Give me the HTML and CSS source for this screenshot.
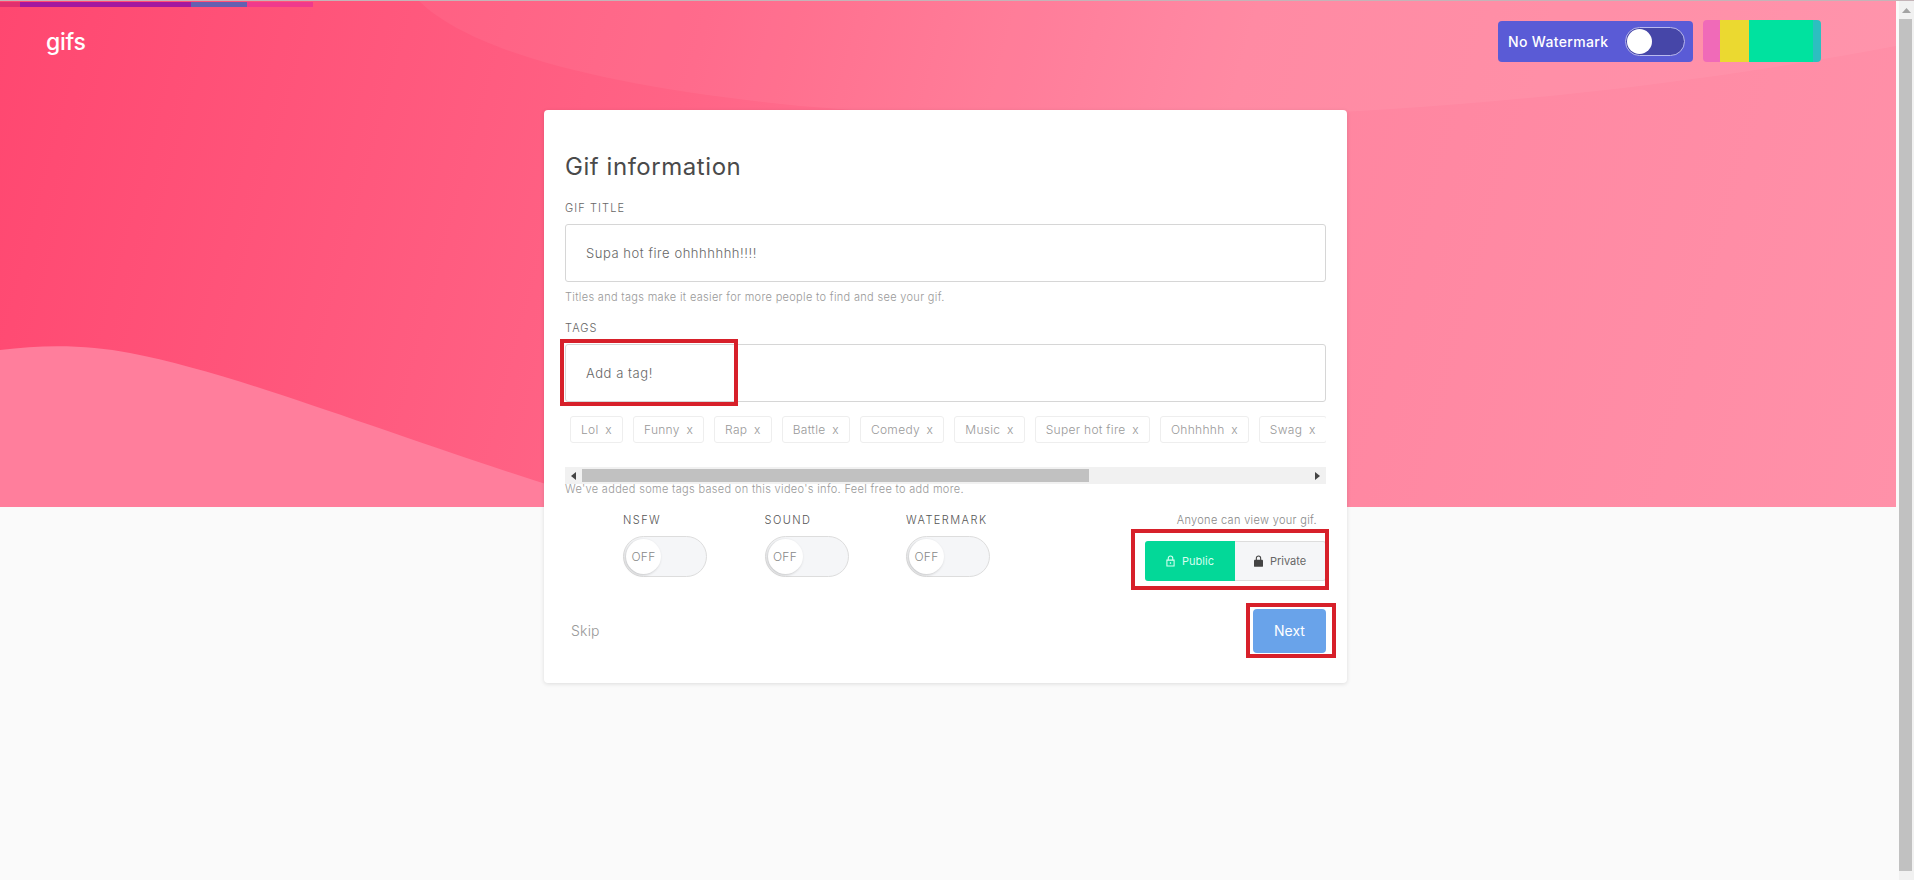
FILE: index.html
```html
<!DOCTYPE html>
<html lang="en">
<head>
    <meta charset="UTF-8">
    <meta name="viewport" content="width=device-width, initial-scale=1.0">
    <title>Gif information</title>
    <link rel="stylesheet" href="styles.css">
</head>
<body>
    <div class="page">
        <div class="hero">
            <svg class="waves" viewBox="0 0 1896 506" preserveAspectRatio="none">
                <path class="wave-top" d="M419 0C470 50 600 85 800 105C1100 130 1500 120 1896 45L1896 0Z"/>
                <path class="wave-bottom" d="M0 349C45 343 90 344 130 352C250 375 400 440 620 506L0 506Z"/>
            </svg>
            <div class="progress">
                <span class="progress-crimson"></span>
                <span class="progress-purple"></span>
                <span class="progress-blue"></span>
                <span class="progress-pink"></span>
            </div>
            <header class="topbar">
                <div class="logo">gifs</div>
                <div class="topbar-right">
                    <div class="watermark">
                        <span>No Watermark</span>
                        <div class="mini-switch"><div class="mini-knob"></div></div>
                    </div>
                    <div class="swatch">
                        <span class="swatch-pink"></span>
                        <span class="swatch-yellow"></span>
                        <span class="swatch-green"></span>
                        <span class="swatch-teal"></span>
                    </div>
                </div>
            </header>
        </div>

        <main class="card">
            <h1>Gif information</h1>
            <div class="label">Gif title</div>
            <div class="field">Supa hot fire ohhhhhhh!!!!</div>
            <p class="help">Titles and tags make it easier for more people to find and see your gif.</p>
            <div class="label label-tags">Tags</div>
            <div class="field-wrap">
                <div class="field">Add a tag!</div>
                <div class="mark mark-tag"></div>
            </div>
            <div class="tags">
                <span class="tag">Lol <i>x</i></span>
                <span class="tag">Funny <i>x</i></span>
                <span class="tag">Rap <i>x</i></span>
                <span class="tag">Battle <i>x</i></span>
                <span class="tag">Comedy <i>x</i></span>
                <span class="tag">Music <i>x</i></span>
                <span class="tag">Super hot fire <i>x</i></span>
                <span class="tag">Ohhhhhh <i>x</i></span>
                <span class="tag">Swag <i>x</i></span>
            </div>
            <div class="hscroll">
                <div class="hscroll-btn"><svg width="5" height="8" viewBox="0 0 5 8"><path d="M5 0V8L0 4Z"/></svg></div>
                <div class="hscroll-thumb"></div>
                <div class="hscroll-rest"></div>
                <div class="hscroll-btn"><svg width="5" height="8" viewBox="0 0 5 8"><path d="M0 0V8L5 4Z"/></svg></div>
            </div>
            <p class="help help-tags">We've added some tags based on this video's info. Feel free to add more.</p>

            <div class="options">
                <div class="switches">
                    <div class="switch-group">
                        <div class="switch-label">NSFW</div>
                        <div class="switch"><div class="knob">OFF</div></div>
                    </div>
                    <div class="switch-group">
                        <div class="switch-label">SOUND</div>
                        <div class="switch"><div class="knob">OFF</div></div>
                    </div>
                    <div class="switch-group">
                        <div class="switch-label">WATERMARK</div>
                        <div class="switch"><div class="knob">OFF</div></div>
                    </div>
                </div>
                <div class="privacy">
                    <div class="privacy-note">Anyone can view your gif.</div>
                    <div class="segment">
                        <div class="segment-item segment-public">
                            <svg width="9" height="12" viewBox="0 0 10 13"><path class="lock-line" d="M2.5 5.5V3.4a2.5 2.5 0 0 1 5 0v2.1M1 5.5h8v6.5H1zM5 8v1.6M4.2 8.8h1.6"/></svg>
                            <span>Public</span>
                        </div>
                        <div class="segment-item segment-private">
                            <svg width="9" height="12" viewBox="0 0 10 13"><path class="lock-line lock-dark" d="M2.6 5.5V3.4a2.4 2.4 0 0 1 4.8 0v2.1"/><rect class="lock-body" y="5" width="10" height="8" rx="1"/></svg>
                            <span>Private</span>
                        </div>
                        <div class="mark mark-segment"></div>
                    </div>
                </div>
            </div>

            <div class="card-footer">
                <a class="skip">Skip</a>
                <div class="next">
                    Next
                    <div class="mark mark-next"></div>
                </div>
            </div>
        </main>
    </div>

    <div class="vscroll">
        <div class="vscroll-btn"><svg width="9" height="5" viewBox="0 0 9 5"><path d="M0 5L4.5 0L9 5Z"/></svg></div>
        <div class="vscroll-thumb"></div>
    </div>
</body>
</html>
```

FILE: styles.css
```css
/* General */
body {
    margin: 0;
    height: 880px;
    overflow: hidden;
    display: flex;
    background-color: #fafafa;
    border-top: 1px solid #c4b4b8;
    box-sizing: border-box;
    font-family: Inter, "Open Sans", sans-serif;
    font-weight: 300;
    color: #666;
}
.page {
    flex: 1;
    min-width: 0;
}

/* Pink header area */
.hero {
    position: relative;
    height: 506px;
    overflow: hidden;
    background: linear-gradient(105deg, #ff4770 0%, #ff6486 35%, #ff849f 62%, #ff91a9 100%);
}
.waves {
    position: absolute;
    top: 0;
    left: 0;
    width: 100%;
    height: 100%;
}
.wave-top {
    fill: rgba(255, 255, 255, 0.05);
}
.wave-bottom {
    fill: #ff7e9c;
}
.progress {
    position: relative;
    display: flex;
    width: 313px;
    height: 5px;
    margin-top: 1px;
}
.progress-crimson { width: 20px; background: #e0306f; }
.progress-purple { width: 171px; background: #a3189f; }
.progress-blue { width: 56px; background: #6460b0; }
.progress-pink { width: 66px; background: #f03a8c; }

.topbar {
    position: relative;
    display: flex;
    justify-content: space-between;
    padding: 13px 75px 0 46px;
}
.logo {
    margin-top: 8px;
    font-size: 23px;
    font-weight: 500;
    line-height: 28px;
    letter-spacing: -0.3px;
    color: #fff;
}
.topbar-right {
    display: flex;
    align-items: flex-start;
    gap: 10px;
}
.watermark {
    display: flex;
    align-items: center;
    justify-content: space-between;
    box-sizing: border-box;
    width: 195px;
    height: 41px;
    margin-top: 1px;
    padding: 0 8px 0 10px;
    border-radius: 4px;
    background: #5a5bd6;
    color: #fff;
    font-size: 14px;
    font-weight: 500;
    letter-spacing: 0.35px;
}
.mini-switch {
    box-sizing: border-box;
    width: 60px;
    height: 29px;
    border: 1px solid #b9b9ee;
    border-radius: 15px;
    background: #4646a8;
}
.mini-knob {
    width: 25px;
    height: 25px;
    margin: 1px 0 0 1px;
    border-radius: 50%;
    background: #fff;
}
.swatch {
    display: flex;
    width: 118px;
    height: 42px;
    border-radius: 4px;
    overflow: hidden;
}
.swatch-pink { width: 17px; background: #f06ab8; }
.swatch-yellow { width: 29px; background: #ebd930; }
.swatch-green { width: 64px; background: #00e29f; }
.swatch-teal { width: 8px; background: #2cbfc0; }

/* Card */
.card {
    position: relative;
    box-sizing: border-box;
    width: 803px;
    height: 573px;
    margin: -397px 0 0 544px;
    padding: 43px 21px 0 21px;
    background: #fff;
    border-radius: 4px;
    box-shadow: 0 1px 4px rgba(0, 0, 0, 0.12);
}
h1 {
    margin: 0;
    font-size: 24px;
    font-weight: 400;
    line-height: 28px;
    letter-spacing: 0.55px;
    color: #4a4a4a;
}
.label {
    margin-top: 20px;
    font-size: 11px;
    line-height: 14px;
    letter-spacing: 1.1px;
    text-transform: uppercase;
    color: #666;
}
.label-tags {
    margin-top: 17px;
}
.field-wrap {
    position: relative;
}
.field {
    box-sizing: border-box;
    height: 58px;
    margin-top: 9px;
    padding-left: 20px;
    border: 1px solid #d6d6d6;
    border-radius: 3px;
    font-size: 13px;
    line-height: 56px;
    letter-spacing: 0.55px;
    color: #666;
}
.help {
    margin: 8px 0 0;
    font-size: 11px;
    line-height: 14px;
    letter-spacing: 0.32px;
    color: #999;
}
.help-tags {
    margin-top: -2px;
}

/* Tags */
.tags {
    display: flex;
    gap: 10px;
    height: 27px;
    margin-top: 14px;
    padding-left: 5px;
    overflow: hidden;
}
.tag {
    flex: none;
    box-sizing: border-box;
    height: 27px;
    padding: 0 10px;
    border: 1px solid #eee;
    border-radius: 3px;
    font-size: 12px;
    line-height: 25px;
    letter-spacing: 0.3px;
    color: #999;
}
.tag i {
    margin-left: 3px;
    font-style: normal;
}

/* Scrollbar under the tags */
.hscroll {
    display: flex;
    height: 17px;
    margin-top: 24px;
    background: #f1f1f1;
}
.hscroll-btn {
    display: flex;
    align-items: center;
    justify-content: center;
    width: 17px;
    fill: #444;
}
.hscroll-thumb {
    width: 507px;
    height: 13px;
    margin-top: 2px;
    background: #c1c1c1;
}
.hscroll-rest {
    flex: 1;
}

/* NSFW, sound, watermark and privacy */
.options {
    display: flex;
    justify-content: space-between;
    margin-top: 17px;
}
.switches {
    display: flex;
    gap: 57.5px;
    padding-left: 58px;
}
.switch-group {
    width: 84px;
}
.switch-label {
    font-size: 11px;
    line-height: 14px;
    letter-spacing: 1.45px;
    white-space: nowrap;
    color: #555;
}
.switch {
    box-sizing: border-box;
    width: 84px;
    height: 41px;
    margin-top: 9px;
    padding: 2px;
    border: 1px solid #ddd;
    border-radius: 21px;
    background: #f5f6f8;
}
.knob {
    width: 35px;
    height: 35px;
    border-radius: 50%;
    background: #fff;
    box-shadow: -1px 1px 3px rgba(0, 0, 0, 0.2);
    font-size: 12px;
    line-height: 35px;
    letter-spacing: 0.3px;
    text-align: center;
    color: #888;
}
.privacy {
    display: flex;
    flex-direction: column;
    align-items: flex-end;
}
.privacy-note {
    padding-right: 9px;
    font-size: 11px;
    line-height: 14px;
    letter-spacing: 0.32px;
    color: #888;
}
.segment {
    position: relative;
    display: flex;
    width: 181px;
    height: 40px;
    margin-top: 14px;
    font-size: 11px;
    font-weight: 400;
}
.segment-item {
    display: flex;
    align-items: center;
    justify-content: center;
    gap: 7px;
    box-sizing: border-box;
}
.segment-public {
    width: 90px;
    border-radius: 3px 0 0 3px;
    background: #03d898;
    color: #d6fff0;
}
.segment-private {
    width: 91px;
    border: 1px solid #ddd;
    border-left: none;
    border-radius: 0 3px 3px 0;
    background: #f5f6f8;
    color: #666;
}
.lock-line {
    fill: none;
    stroke: #d6fff0;
    stroke-width: 1.2;
}
.lock-dark {
    stroke: #444;
}
.lock-body {
    fill: #444;
}

/* Footer */
.card-footer {
    display: flex;
    align-items: center;
    justify-content: space-between;
    margin-top: 28px;
}
.skip {
    padding-left: 6px;
    font-size: 14px;
    letter-spacing: 0.2px;
    color: #999;
    margin-top: -1px;
}
.next {
    position: relative;
    width: 73px;
    height: 44px;
    border-radius: 4px;
    background: #69a3ea;
    font-size: 14px;
    font-weight: 400;
    line-height: 44px;
    text-align: center;
    color: #fff;
}

/* Red marks drawn on top of the screenshot */
.mark {
    position: absolute;
    box-sizing: border-box;
    border: 4px solid #d7202a;
}
.mark-tag {
    top: -5px;
    left: -5px;
    width: 178px;
    height: 67px;
}
.mark-segment {
    top: -12px;
    left: -14px;
    width: 198px;
    height: 61px;
}
.mark-next {
    top: -6px;
    left: -7px;
    width: 90px;
    height: 55px;
}

/* Page scrollbar */
.vscroll {
    display: flex;
    flex-direction: column;
    width: 18px;
    background: linear-gradient(90deg, #fafafa 3px, #f1f1f1 3px);
}
.vscroll-btn {
    display: flex;
    align-items: center;
    justify-content: center;
    height: 18px;
    padding-left: 3px;
    fill: #a3a3a3;
}
.vscroll-thumb {
    flex: 1;
    margin: 0 2px 9px 3px;
    background: #c1c1c1;
}
```
